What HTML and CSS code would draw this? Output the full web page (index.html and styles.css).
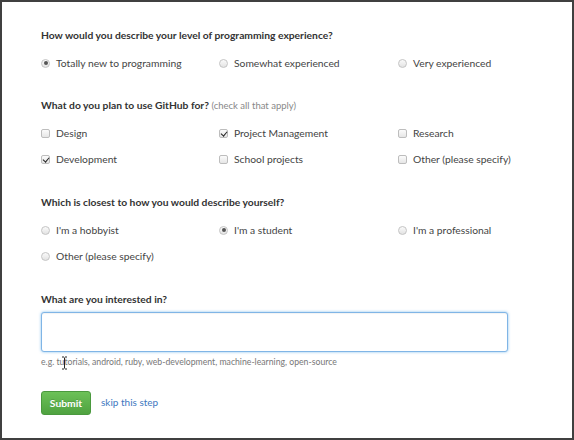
FILE: index.html
```html
<!DOCTYPE html>
<html>
<head>
<meta charset="utf-8">
<link rel="stylesheet" href="styles.css">
</head>
<body>
<div class="frame">
  <form class="survey">
    <section class="question q-first">
      <h3 class="q-title">How would you describe your level of programming experience?</h3>
      <div class="options">
        <label class="opt"><span class="radio checked"></span>Totally new to programming</label>
        <label class="opt"><span class="radio"></span>Somewhat experienced</label>
        <label class="opt"><span class="radio"></span>Very experienced</label>
      </div>
    </section>

    <section class="question q-uses">
      <h3 class="q-title">What do you plan to use GitHub for? <span class="note">(check all that apply)</span></h3>
      <div class="options">
        <label class="opt"><span class="check"></span>Design</label>
        <label class="opt"><span class="check checked"></span>Project Management</label>
        <label class="opt"><span class="check"></span>Research</label>
        <label class="opt"><span class="check checked"></span>Development</label>
        <label class="opt"><span class="check"></span>School projects</label>
        <label class="opt"><span class="check"></span>Other (please specify)</label>
      </div>
    </section>

    <section class="question">
      <h3 class="q-title">Which is closest to how you would describe yourself?</h3>
      <div class="options">
        <label class="opt"><span class="radio"></span>I'm a hobbyist</label>
        <label class="opt"><span class="radio checked"></span>I'm a student</label>
        <label class="opt"><span class="radio"></span>I'm a professional</label>
        <label class="opt"><span class="radio"></span>Other (please specify)</label>
      </div>
    </section>

    <section class="question interests">
      <h3 class="q-title">What are you interested in?</h3>
      <div class="field-wrap">
        <div class="text-field"></div>
        <p class="hint">e.g. tutorials, android, ruby, web-development, machine-learning, open-source</p>
        <svg class="cursor" width="7" height="14" viewBox="0 0 7 14"><path d="M1 1h2M4 1h2M3.5 1.5v11M1 13h2M4 13h2" stroke="#222" stroke-width="1" fill="none"/></svg>
      </div>
    </section>

    <div class="actions">
      <button type="button" class="btn-submit">Submit</button>
      <a class="skip" href="#">skip this step</a>
    </div>
  </form>
</div>
</body>
</html>
```
FILE: styles.css
```css
* { box-sizing: border-box; }
html, body { margin: 0; padding: 0; }
body {
  font-family: Lato, "Open Sans", "Liberation Sans", sans-serif;
  color: #333;
  background: #404040;
}
.frame {
  width: 574px;
  height: 440px;
  border: 2px solid #404040;
  background: #fff;
}
.survey {
  padding: 25px 0 0 39px;
}
.question { margin-bottom: 27px; }
.q-first { margin-bottom: 26px; }
.q-title {
  margin: 0 0 12px;
  font-size: 10.3px;
  font-weight: 700;
  line-height: 16px;
  color: #333;
}
.q-uses .q-title { margin-bottom: 11px; }
.note {
  font-weight: 400;
  color: #888;
  font-size: 9.5px;
}
.options {
  display: grid;
  grid-template-columns: 178px 179px 160px;
  row-gap: 10px;
}
.opt {
  display: flex;
  align-items: center;
  gap: 6px;
  font-size: 10.3px;
  line-height: 16px;
  color: #444;
}
.radio {
  width: 9px;
  height: 9px;
  border-radius: 50%;
  border: 1px solid #c4c4c4;
  background: linear-gradient(#fafafa, #e3e3e3);
  position: relative;
  flex: none;
}
.radio.checked::after {
  content: "";
  position: absolute;
  left: 1.5px;
  top: 1.5px;
  width: 4px;
  height: 4px;
  border-radius: 50%;
  background: #555;
}
.check {
  width: 9px;
  height: 9px;
  border-radius: 2px;
  border: 1px solid #bdbdbd;
  background: linear-gradient(#fbfbfb, #e6e6e6);
  position: relative;
  flex: none;
}
.check.checked::after {
  content: "";
  position: absolute;
  left: 2.2px;
  top: 0.2px;
  width: 2.8px;
  height: 5.2px;
  border: solid #222;
  border-width: 0 1.7px 1.7px 0;
  transform: rotate(40deg);
}
.interests { margin-bottom: 0; }
.interests .q-title { margin-bottom: 5px; }
.field-wrap { position: relative; width: 467px; }
.text-field {
  height: 40px;
  border: 1px solid #80b5e6;
  border-radius: 3px;
  background: #fff;
  box-shadow: 0 0 3px rgba(81, 167, 232, 0.7), inset 0 1px 1px rgba(0,0,0,0.05);
}
.hint {
  margin: 3px 0 0;
  font-size: 8.7px;
  line-height: 13px;
  color: #777;
}
.cursor {
  position: absolute;
  left: 20px;
  top: 44px;
}
.actions {
  display: flex;
  align-items: center;
  gap: 10px;
  margin-top: 23px;
}
.btn-submit {
  width: 50px;
  height: 24px;
  padding: 0;
  border: 1px solid #4a993e;
  border-radius: 3px;
  background: linear-gradient(#6cc158, #4fa240);
  color: #fff;
  font-family: inherit;
  font-size: 10.3px;
  font-weight: 700;
  text-shadow: 0 -1px 0 rgba(0,0,0,0.15);
}
.skip {
  font-size: 10px;
  color: #4078c0;
  text-decoration: none;
  line-height: 16px;
  margin-top: -2px;
}
```
